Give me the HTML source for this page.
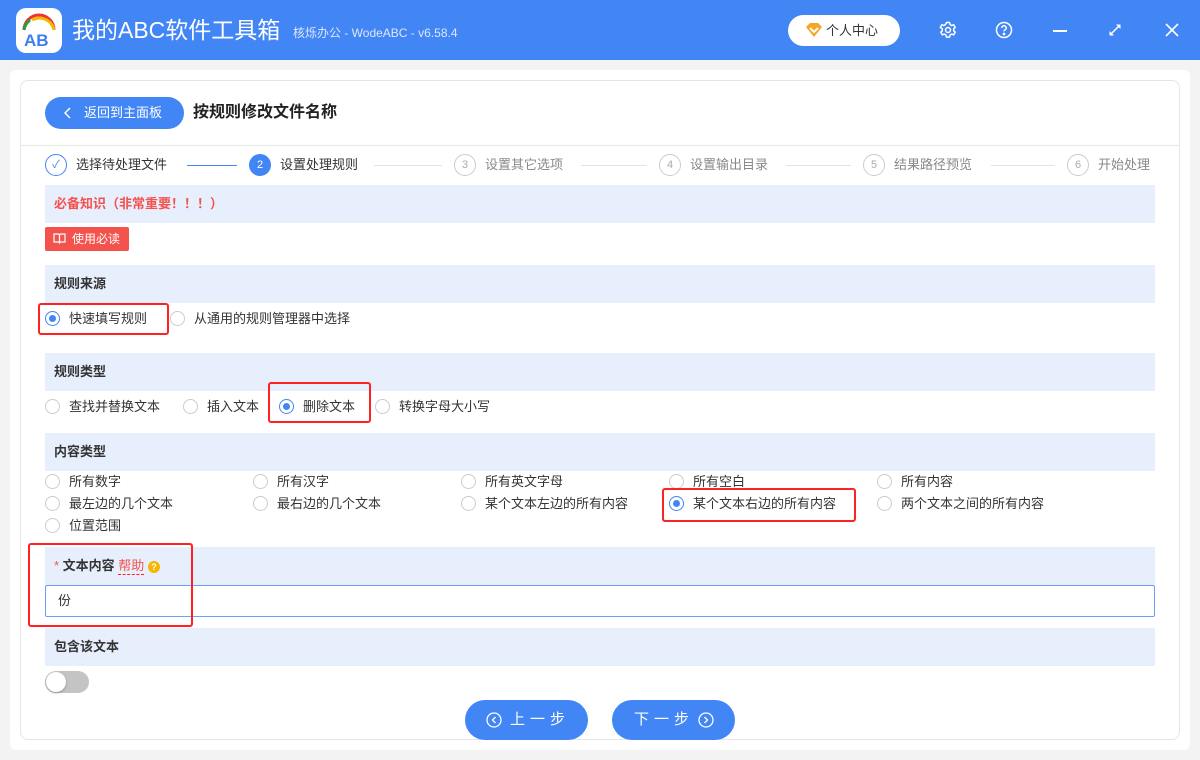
<!DOCTYPE html>
<html><head><meta charset="utf-8"><style>
*{margin:0;padding:0;box-sizing:border-box}
body{width:1200px;height:760px;background:#f3f3f3;font-family:"Liberation Sans","Noto Sans CJK SC",sans-serif;font-size:13px;color:#333;position:relative;overflow:hidden}
.a{position:absolute}
.hdr{left:0;top:0;width:1200px;height:60px;background:#4286f5}
.outer{left:10px;top:70px;width:1180px;height:680px;background:#fff;border-radius:6px}
.card{left:20px;top:80px;width:1160px;height:660px;background:#fff;border:1px solid #e6e6e6;border-radius:8px}
.sec{left:45px;width:1110px;height:38px;background:#e8effc;font-weight:bold;font-size:13px;padding:0 9px;line-height:38px}
.r{display:inline-block;width:15px;height:15px;border:1px solid #ccc;border-radius:50%;vertical-align:middle;position:relative;background:#fff}
.r.on{border-color:#4286f5}
.r.on:after{content:"";position:absolute;left:3px;top:3px;width:7px;height:7px;border-radius:50%;background:#4286f5}
.opt{position:absolute;white-space:nowrap;font-size:13px;line-height:16px}
.opt .r{margin-right:9px;margin-top:-2px}
.red{position:absolute;border:2px solid #f22;border-radius:3px}
.step{position:absolute;top:154px;white-space:nowrap;font-size:13px;line-height:22px;color:#888}
.sc{display:inline-block;width:22px;height:22px;border:1px solid #ccc;border-radius:50%;text-align:center;font-size:11px;vertical-align:middle;margin-right:9px;line-height:20px;color:#aaa;margin-top:-2px}
.ln{position:absolute;top:165px;height:1px;background:#e3e3e3}
.btn{position:absolute;top:700px;width:123px;height:40px;border-radius:20px;background:#4286f5}
.bt{position:absolute;top:710px;color:#fff;font-size:15px;line-height:20px;letter-spacing:5px;white-space:nowrap}
</style></head><body>
<div class="a hdr"></div>
<div class="a" style="left:16px;top:8px;width:46px;height:45px;background:#fff;border-radius:10px">
<svg width="46" height="45" viewBox="0 0 46 45"><path d="M8 22 A15 15 0 0 1 38 22" fill="none" stroke="#e33" stroke-width="3"/><path d="M16 12 A15 15 0 0 1 38 22" fill="none" stroke="#f5b800" stroke-width="3"/><path d="M8 22 A15 15 0 0 1 14 12" fill="none" stroke="#2a9d3a" stroke-width="3"/><text x="8" y="38" font-family="Liberation Sans" font-weight="bold" font-size="17" fill="#3b7ff0">AB</text></svg></div>
<div class="a" style="left:72px;top:14px;color:#fff;font-size:23px;line-height:32px">我的ABC软件工具箱</div>
<div class="a" style="left:293px;top:25px;color:#dce7fd;font-size:12px;line-height:16px">核烁办公 - WodeABC - v6.58.4</div>
<div class="a" style="left:788px;top:15px;width:112px;height:31px;background:#fff;border-radius:16px;font-size:13px;line-height:31px;padding-left:38px;color:#333">个人中心</div>
<svg class="a" style="left:805px;top:22px" width="18" height="16" viewBox="0 0 18 16"><path d="M1 5 L5 1 H13 L17 5 L9 15 Z" fill="#f5a623"/><path d="M5 6 L9 10 L13 6" fill="none" stroke="#fff" stroke-width="2"/></svg>
<svg class="a" style="left:939px;top:21px" width="18" height="18" viewBox="0 0 18 18" fill="none" stroke="#fff" stroke-width="1.5"><circle cx="9" cy="9" r="2.5"/><path d="M7.5 1.5h3l.5 2 1.7 1 2-.7 1.5 2.6-1.5 1.4v2l1.5 1.4-1.5 2.6-2-.7-1.7 1-.5 2h-3l-.5-2-1.7-1-2 .7-1.5-2.6 1.5-1.4v-2L1.3 6.4l1.5-2.6 2 .7 1.7-1z"/></svg>
<svg class="a" style="left:995px;top:21px" width="18" height="18" viewBox="0 0 18 18" fill="none" stroke="#fff" stroke-width="1.5"><circle cx="9" cy="9" r="7.5"/><path d="M6.8 7a2.2 2.2 0 1 1 3 2c-.6.3-.8.7-.8 1.4"/><circle cx="9" cy="13" r=".6" fill="#fff"/></svg>
<div class="a" style="left:1053px;top:30px;width:14px;height:1.5px;background:#fff"></div>
<svg class="a" style="left:1108px;top:23px" width="14" height="14" viewBox="0 0 14 14" stroke="#fff" stroke-width="1.5" fill="#fff"><path d="M2 12 L12 2"/><path d="M8 1.5h4.5V6z" stroke="none"/><path d="M6 12.5H1.5V8z" stroke="none"/></svg>
<svg class="a" style="left:1165px;top:23px" width="14" height="14" viewBox="0 0 14 14" stroke="#fff" stroke-width="1.6"><path d="M1 1L13 13M13 1L1 13"/></svg>

<div class="a outer"></div>
<div class="a card"></div>
<div class="a" style="left:45px;top:97px;width:139px;height:32px;background:#4286f5;border-radius:16px;color:#fff;font-size:13px;line-height:32px;padding-left:39px">返回到主面板</div>
<svg class="a" style="left:64px;top:107px" width="8" height="12" viewBox="0 0 8 12" fill="none" stroke="#fff" stroke-width="1.5"><path d="M6 1L1 6l5 5"/></svg>
<div class="a" style="left:193px;top:102px;font-size:16px;font-weight:bold;line-height:22px;color:#222">按规则修改文件名称</div>
<div class="a" style="left:21px;top:145px;width:1158px;height:1px;background:#e8e8e8"></div>

<div class="step" style="left:45px;color:#333"><span class="sc" style="border-color:#4286f5;color:#4286f5">✓</span>选择待处理文件</div>
<div class="ln" style="left:187px;width:50px;background:#4286f5"></div>
<div class="step" style="left:249px;color:#333"><span class="sc" style="background:#4286f5;border-color:#4286f5;color:#fff">2</span>设置处理规则</div>
<div class="ln" style="left:374px;width:68px"></div>
<div class="step" style="left:454px"><span class="sc">3</span>设置其它选项</div>
<div class="ln" style="left:581px;width:66px"></div>
<div class="step" style="left:659px"><span class="sc">4</span>设置输出目录</div>
<div class="ln" style="left:786px;width:65px"></div>
<div class="step" style="left:863px"><span class="sc">5</span>结果路径预览</div>
<div class="ln" style="left:991px;width:64px"></div>
<div class="step" style="left:1067px"><span class="sc">6</span>开始处理</div>

<div class="a sec" style="top:185px;color:#f4524d">必备知识（非常重要！！！）</div>
<div class="a" style="left:45px;top:227px;width:84px;height:24px;background:#f4524d;border-radius:2px;color:#fff;font-size:12px;line-height:24px;padding-left:27px">使用必读</div>
<svg class="a" style="left:53px;top:233px" width="13" height="11" viewBox="0 0 13 11" fill="none" stroke="#fff" stroke-width="1.2"><path d="M1 1h4.5l1 1 1-1H12v8H7.5l-1 1-1-1H1z M6.5 2v8"/></svg>

<div class="a sec" style="top:265px">规则来源</div>
<div class="opt" style="left:45px;top:311px"><span class="r on"></span>快速填写规则</div>
<div class="opt" style="left:170px;top:311px"><span class="r"></span>从通用的规则管理器中选择</div>
<div class="red" style="left:38px;top:303px;width:131px;height:32px"></div>

<div class="a sec" style="top:353px">规则类型</div>
<div class="opt" style="left:45px;top:399px"><span class="r"></span>查找并替换文本</div>
<div class="opt" style="left:183px;top:399px"><span class="r"></span>插入文本</div>
<div class="opt" style="left:279px;top:399px"><span class="r on"></span>删除文本</div>
<div class="opt" style="left:375px;top:399px"><span class="r"></span>转换字母大小写</div>
<div class="red" style="left:268px;top:382px;width:103px;height:41px"></div>

<div class="a sec" style="top:433px">内容类型</div>
<div class="opt" style="left:45px;top:474px"><span class="r"></span>所有数字</div>
<div class="opt" style="left:253px;top:474px"><span class="r"></span>所有汉字</div>
<div class="opt" style="left:461px;top:474px"><span class="r"></span>所有英文字母</div>
<div class="opt" style="left:669px;top:474px"><span class="r"></span>所有空白</div>
<div class="opt" style="left:877px;top:474px"><span class="r"></span>所有内容</div>
<div class="opt" style="left:45px;top:496px"><span class="r"></span>最左边的几个文本</div>
<div class="opt" style="left:253px;top:496px"><span class="r"></span>最右边的几个文本</div>
<div class="opt" style="left:461px;top:496px"><span class="r"></span>某个文本左边的所有内容</div>
<div class="opt" style="left:669px;top:496px"><span class="r on"></span>某个文本右边的所有内容</div>
<div class="opt" style="left:877px;top:496px"><span class="r"></span>两个文本之间的所有内容</div>
<div class="opt" style="left:45px;top:518px"><span class="r"></span>位置范围</div>
<div class="red" style="left:662px;top:488px;width:194px;height:34px"></div>

<div class="a sec" style="top:547px"><span style="color:#f4524d;font-weight:normal">*</span> 文本内容 <span style="color:#f4524d;font-weight:normal;border-bottom:1px dashed #f22;line-height:16px;display:inline-block">帮助</span> <span style="display:inline-block;width:12px;height:12px;border-radius:50%;background:#f5b800;color:#fff;font-size:9px;line-height:12px;text-align:center;vertical-align:middle">?</span></div>
<div class="a" style="left:45px;top:585px;width:1110px;height:32px;background:#fff;border:1px solid #6aa0f7;border-radius:2px;padding-left:12px;line-height:30px;font-size:13px">份</div>
<div class="red" style="left:28px;top:543px;width:165px;height:84px"></div>

<div class="a sec" style="top:628px">包含该文本</div>
<div class="a" style="left:45px;top:671px;width:44px;height:22px;background:#c4c4c4;border-radius:11px"></div>
<div class="a" style="left:46px;top:672px;width:20px;height:20px;background:#fff;border-radius:50%;box-shadow:0 1px 2px rgba(0,0,0,.3)"></div>

<div class="btn" style="left:465px"></div>
<div class="btn" style="left:612px"></div>
<div class="bt" style="left:510px">上一步</div>
<div class="bt" style="left:634px">下一步</div>
<svg class="a" style="left:486px;top:712px" width="16" height="16" viewBox="0 0 16 16" fill="none" stroke="#fff" stroke-width="1.3"><circle cx="8" cy="8" r="7"/><path d="M9.5 5L6.5 8l3 3"/></svg>
<svg class="a" style="left:698px;top:712px" width="16" height="16" viewBox="0 0 16 16" fill="none" stroke="#fff" stroke-width="1.3"><circle cx="8" cy="8" r="7"/><path d="M6.5 5l3 3-3 3"/></svg>
</body></html>
